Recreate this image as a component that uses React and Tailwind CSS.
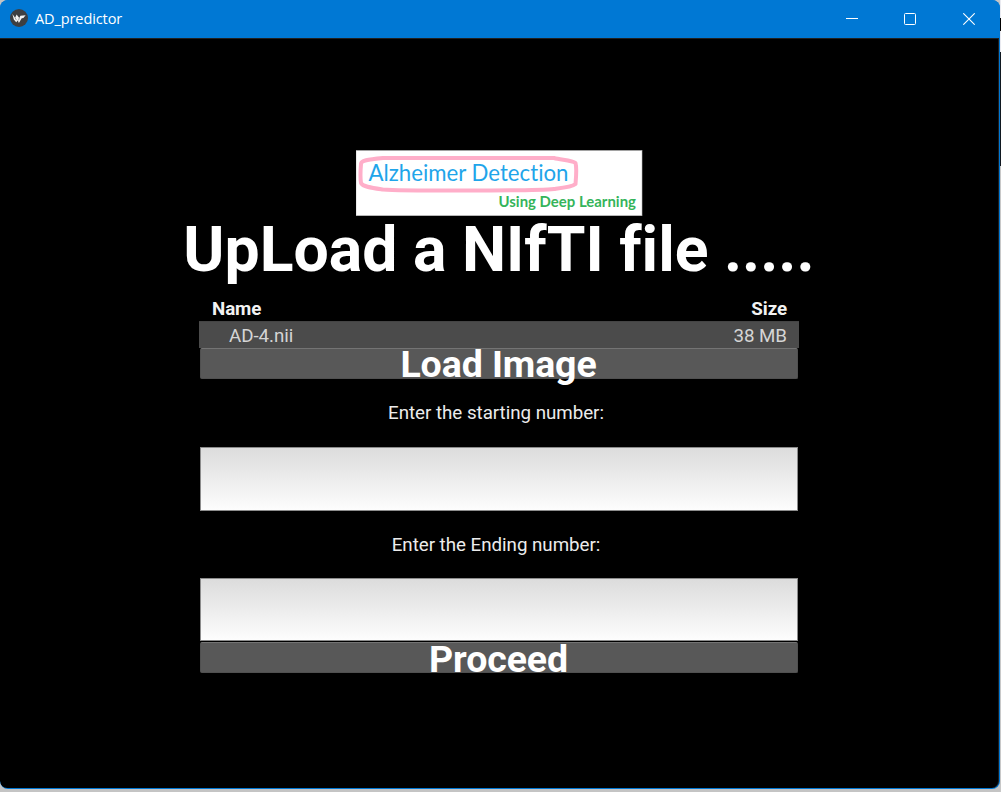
function TitleBar() {
  return (
    <header className="flex h-[38px] shrink-0 items-center bg-[#0078d4] text-white">
      <svg className="ml-[9px] shrink-0" width="20" height="20" viewBox="0 0 20 20">
        <circle cx="10" cy="9" r="9" fill="#3d3f42" />
        <path d="M3.4 4.9 L6.1 8.7 L7.6 5.5 L10.3 8.9 L11.4 6.7 L16.6 6.3 L14.4 8.9 L12.7 9.3 L9.9 13.9 L8.8 11.5 L7.2 13.3 L4.8 10.5 Z" fill="#f4f4f4" />
        <path d="M6.1 8.7 L7.4 11.1 M10.3 8.9 L9.6 11.3" stroke="#8a8c8e" strokeWidth="0.8" />
      </svg>
      <span className="ml-[6px] font-['Open_Sans',sans-serif] text-[14.5px] leading-5 tracking-[-0.1px]">AD_predictor</span>
      <div className="ml-auto mr-px flex h-full">
        <button className="flex w-[58px] items-center justify-center" aria-label="Minimize">
          <svg width="12" height="12" viewBox="0 0 12 12"><path d="M0 5.5H12" stroke="white" /></svg>
        </button>
        <button className="flex w-[58px] items-center justify-center" aria-label="Maximize">
          <svg width="12" height="12" viewBox="0 0 12 12"><rect x="0.5" y="0.5" width="11" height="11" rx="1" fill="none" stroke="white" /></svg>
        </button>
        <button className="flex w-[60px] items-center justify-center" aria-label="Close">
          <svg width="12" height="12" viewBox="0 0 12 12"><path d="M0.3 0.3L11.7 11.7M11.7 0.3L0.3 11.7" stroke="white" strokeWidth="1.1" /></svg>
        </button>
      </div>
    </header>
  );
}

function Logo() {
  return (
    <svg className="mt-[111px] ml-[356px] block shrink-0" width="287" height="66" viewBox="0 0 287 66">
      <rect x="0" y="0.5" width="286" height="65.2" fill="white" stroke="#b9b9b9" strokeWidth="0.6" />
      <path d="M5 14 C5 10.5 11 9.5 27 8 L198 8 C205 10 216 10 219.5 13 C221 18 220 28 219.5 34 C216 37 206 38 198 39 C180 41 45 41 27 39.5 C16 38 7 37 5 33 C4 27 4.5 20 5 14 Z" fill="none" stroke="#ffaec9" strokeWidth="4" strokeLinejoin="round" />
      <text x="12.5" y="31" textLength="200" lengthAdjust="spacingAndGlyphs" className="font-['Lato',sans-serif] text-[22.5px] [font-variant-ligatures:none]" fill="#1fa5ea">Alzheimer Detection</text>
      <text x="142.5" y="56.5" textLength="137.5" lengthAdjust="spacingAndGlyphs" className="font-['Lato',sans-serif] text-[14.5px] font-bold" fill="#35b45a">Using Deep Learning</text>
    </svg>
  );
}

function ActionButton({ children, className = "" }) {
  return (
    <button className={`flex h-[31px] w-[598px] items-center justify-center whitespace-nowrap rounded-[2px] border border-[#505050] border-t-[#747474] bg-[#585858] pr-px text-[37.5px] leading-[31px] font-bold tracking-[-0.1px] text-white ${className}`}>
      {children}
    </button>
  );
}

function NumberInput({ label, className }) {
  return (
    <input aria-label={label} className={`block w-[598px] border border-[#8c8c8c] bg-linear-to-b from-[#dcdcdc] to-[#fdfdfd] px-3 text-lg text-black outline-none ${className}`} />
  );
}

export default function App() {
  return (
    <div className="flex h-[792px] w-[1001px] bg-[linear-gradient(to_bottom,#e9eaf0_0,#e9eaf0_18px,#000_18px,#000_31px,#e9eaf0_31px,#e9eaf0_52px,#101820_52px,#101820_166px,#c8c8c8_166px)]">
      <div className="flex h-full w-[1000px] flex-col bg-[#c4c4c4]">
        <div className="flex h-[789px] w-[1000px] flex-col overflow-hidden rounded-[8px] bg-[#0078d4]">
          <TitleBar />
          <main className="mr-px mb-px flex flex-1 flex-col rounded-b-[7px] border-t border-r border-[#202020] bg-black font-['Roboto',sans-serif] text-white">
            <Logo />
            <h1 className="mt-[-3px] h-[84px] text-center text-[62.5px] leading-[74px] font-bold whitespace-nowrap [font-variant-ligatures:none]">UpLoad a NIfTI file .....</h1>
            <section className="ml-[199px] w-[600px]">
              <div className="mt-[-1px] flex h-[25px] justify-between pr-[12px] pl-[13px] text-[18.75px] leading-[26px] font-bold tracking-[-0.1px] text-[#f2f2f2]">
                <span>Name</span>
                <span>Size</span>
              </div>
              <div className="flex h-[27px] items-center justify-between border-t border-[#444] bg-[#4b4b4b] pr-[12px] pl-[30px] text-[18.75px] leading-[26px] tracking-[-0.05px] text-[#d5d5d5]">
                <span className="pt-px">AD-4.nii</span>
                <span className="pt-px">38 MB</span>
              </div>
            </section>
            <section className="ml-[200px] w-[598px]">
              <ActionButton className="pt-[2px]">Load Image</ActionButton>
              <label className="mr-[6px] flex h-[68px] items-center justify-center text-[18.75px] tracking-[-0.03px] text-[#ececec]">Enter the starting number:</label>
              <NumberInput label="Starting number" className="h-[64px]" />
              <label className="mr-[6px] flex h-[67px] items-center justify-center pt-px text-[18.75px] tracking-[-0.03px] text-[#ececec]">Enter the Ending number:</label>
              <NumberInput label="Ending number" className="mb-px h-[63px]" />
              <ActionButton className="pt-[4px]">Proceed</ActionButton>
            </section>
          </main>
        </div>
      </div>
    </div>
  );
}
